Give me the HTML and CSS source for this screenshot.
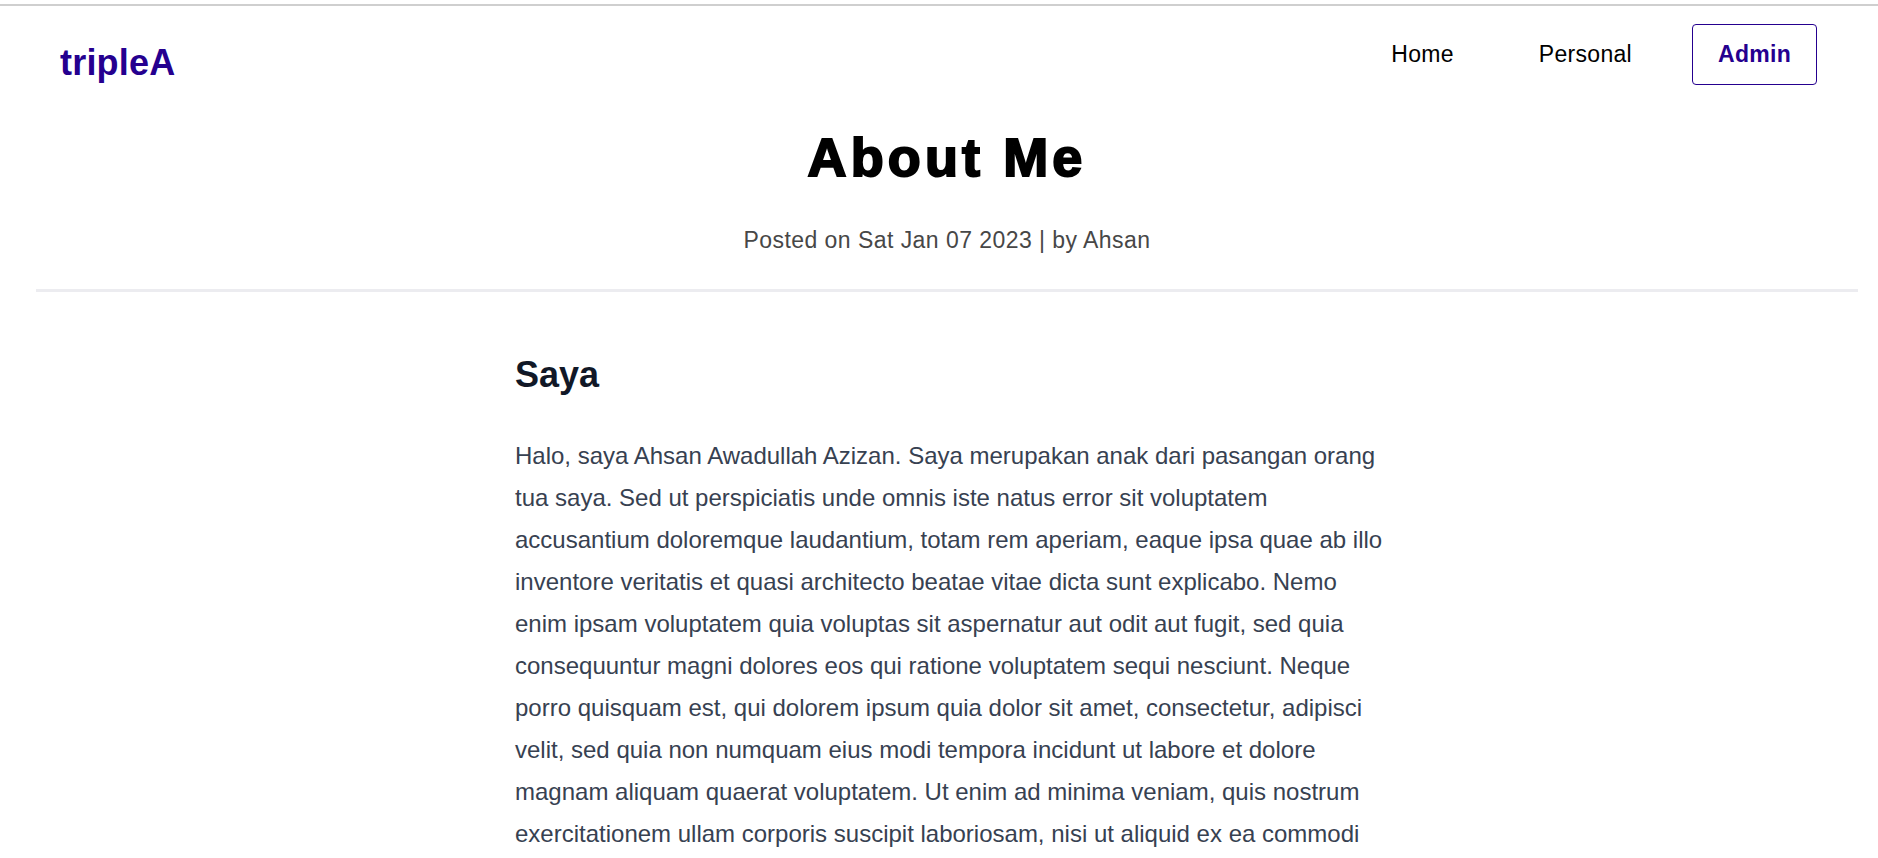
FILE: index.html
```html
<!DOCTYPE html>
<html lang="id">
<head>
<meta charset="utf-8">
<title>About Me - tripleA</title>
<link rel="stylesheet" href="styles.css">
</head>
<body>
<div class="topline"></div>
<header class="site-header">
  <a class="logo" href="#">tripleA</a>
  <nav class="nav">
    <a class="nav-link" href="#">Home</a>
    <a class="nav-link" href="#">Personal</a>
    <a class="nav-btn" href="#">Admin</a>
  </nav>
</header>
<main class="main">
  <section class="post-head">
    <h1 class="post-title">About Me</h1>
    <p class="post-meta">Posted on Sat Jan 07 2023 | by Ahsan</p>
  </section>
  <hr class="divider">
  <article class="prose">
    <h2 class="prose-h2">Saya</h2>
    <p class="prose-p">Halo, saya Ahsan Awadullah Azizan. Saya merupakan anak dari pasangan orang tua saya. Sed ut perspiciatis unde omnis iste natus error sit voluptatem accusantium doloremque laudantium, totam rem aperiam, eaque ipsa quae ab illo inventore veritatis et quasi architecto beatae vitae dicta sunt explicabo. Nemo enim ipsam voluptatem quia voluptas sit aspernatur aut odit aut fugit, sed quia consequuntur magni dolores eos qui ratione voluptatem sequi nesciunt. Neque porro quisquam est, qui dolorem ipsum quia dolor sit amet, consectetur, adipisci velit, sed quia non numquam eius modi tempora incidunt ut labore et dolore magnam aliquam quaerat voluptatem. Ut enim ad minima veniam, quis nostrum exercitationem ullam corporis suscipit laboriosam, nisi ut aliquid ex ea commodi</p>
  </article>
</main>
</body>
</html>
```
FILE: styles.css
```css
* { box-sizing: border-box; }
html, body { margin: 0; padding: 0; background: #fff; }
body {
  font-family: "Liberation Sans", Arial, sans-serif;
  color: #000;
  height: 858px;
  overflow: hidden;
}
a { text-decoration: none; }

.topline {
  margin-top: 4px;
  height: 2px;
  background: #cfcfcf;
}

.site-header {
  display: flex;
  justify-content: space-between;
  align-items: flex-start;
  padding: 18px 61px 0 60px;
}
.logo {
  margin-top: 18px;
  font-size: 36px;
  font-weight: 700;
  letter-spacing: 0.2px;
  color: #25008f;
  line-height: normal;
}
.nav {
  display: flex;
  align-items: center;
  gap: 35px;
}
.nav-link {
  padding: 0 25px;
  font-size: 23px;
  letter-spacing: 0.3px;
  color: #000;
}
.nav-link:first-child { padding-left: 0; }
.nav-btn {
  width: 125px;
  height: 61px;
  border: 1px solid #25008f;
  border-radius: 4px;
  color: #25008f;
  font-size: 23px;
  font-weight: 700;
  letter-spacing: 0.3px;
  display: flex;
  align-items: center;
  justify-content: center;
}

.main {
  margin: 0 20px 0 36px;
}
.post-head {
  text-align: center;
  padding-top: 41px;
}
.post-title {
  margin: 0;
  font-size: 54px;
  font-weight: 900;
  line-height: normal;
  letter-spacing: 4.1px;
  -webkit-text-stroke: 2px #000;
  color: #000;
}
.post-meta {
  margin: 39px 0 0 0;
  font-size: 23px;
  letter-spacing: 0.45px;
  color: #474747;
  line-height: normal;
}
.divider {
  margin: 35px 0 0 0;
  border: 0;
  height: 3px;
  background: #ececf0;
}

.prose {
  width: 874px;
  margin: 0 0 0 479px;
}
.prose-h2 {
  margin: 62px 0 0 0;
  font-size: 36px;
  font-weight: 700;
  line-height: normal;
  color: #111827;
}
.prose-p {
  margin: 39px 0 0 0;
  font-size: 24px;
  line-height: 42px;
  color: #374151;
}
```
